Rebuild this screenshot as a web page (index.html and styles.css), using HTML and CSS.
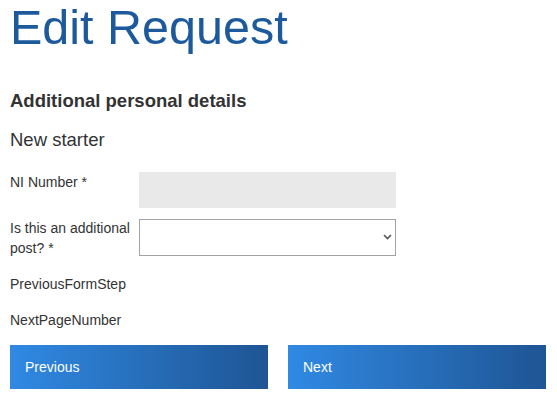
FILE: index.html
```html
<!DOCTYPE html>
<html lang="en">
<head>
<meta charset="utf-8">
<title>Edit Request</title>
<link rel="stylesheet" href="styles.css">
</head>
<body>
<div class="page">
  <h1 class="title">Edit Request</h1>
  <h2 class="section">Additional personal details</h2>
  <h3 class="subsection">New starter</h3>
  <div class="row row-ni">
    <label class="label">NI Number *</label>
    <div class="field readonly"></div>
  </div>
  <div class="row row-post">
    <label class="label">Is this an additional post? *</label>
    <div class="select-wrap">
      <select class="select"><option></option></select>
      <svg class="chevron" width="9" height="6" viewBox="0 0 9 6"><path d="M1 1 L4.5 4.5 L8 1" fill="none" stroke="#555" stroke-width="1.6"/></svg>
    </div>
  </div>
  <div class="row row-text">
    <span class="label">PreviousFormStep</span>
  </div>
  <div class="row row-text row-last">
    <span class="label">NextPageNumber</span>
  </div>
  <div class="buttons">
    <button class="btn">Previous</button>
    <button class="btn">Next</button>
  </div>
</div>
</body>
</html>
```
FILE: styles.css
```css
html, body {
  margin: 0;
  padding: 0;
  background: #fff;
}
body {
  font-family: "Liberation Sans", Arial, sans-serif;
  color: #333;
}
.page {
  padding: 0 11px 0 10px;
}
.title {
  margin: 0;
  font-size: 48.5px;
  line-height: 54px;
  font-weight: normal;
  color: #1d5a9c;
}
.section {
  margin: 36px 0 0;
  font-size: 18.5px;
  line-height: 22px;
  font-weight: bold;
  color: #333;
}
.subsection {
  margin: 17px 0 0;
  font-size: 18.5px;
  line-height: 22px;
  font-weight: normal;
  color: #333;
}
.row {
  display: flex;
  align-items: flex-start;
  font-size: 14px;
  line-height: 20px;
}
.label {
  width: 129px;
  flex: none;
  font-size: 14px;
  line-height: 20px;
  color: #333;
}
.row-ni {
  margin-top: 21px;
  margin-bottom: 11px;
}
.field {
  width: 257px;
  height: 36px;
  background: #e9e9e9;
}
.row-post {
  margin-bottom: 16px;
}
.row-post .label {
  margin-top: -1px;
}
.select-wrap {
  position: relative;
  width: 257px;
  height: 37px;
}
.select {
  appearance: none;
  -webkit-appearance: none;
  box-sizing: border-box;
  width: 257px;
  height: 37px;
  margin: 0;
  border: 1px solid #a3a3a3;
  border-radius: 0;
  background: #fff;
  font-family: inherit;
}
.chevron {
  position: absolute;
  left: 244px;
  top: 15px;
}
.row-text {
  margin-bottom: 16px;
}
.row-last {
  margin-bottom: 15px;
}
.row-text .label {
  width: auto;
}
.buttons {
  display: flex;
  gap: 20px;
}
.btn {
  width: 258px;
  height: 44px;
  border: 0;
  margin: 0;
  padding: 0 0 0 15px;
  text-align: left;
  font-family: inherit;
  font-size: 14px;
  color: #fff;
  background: linear-gradient(to right, #3089e3, #1e5594);
}
```
